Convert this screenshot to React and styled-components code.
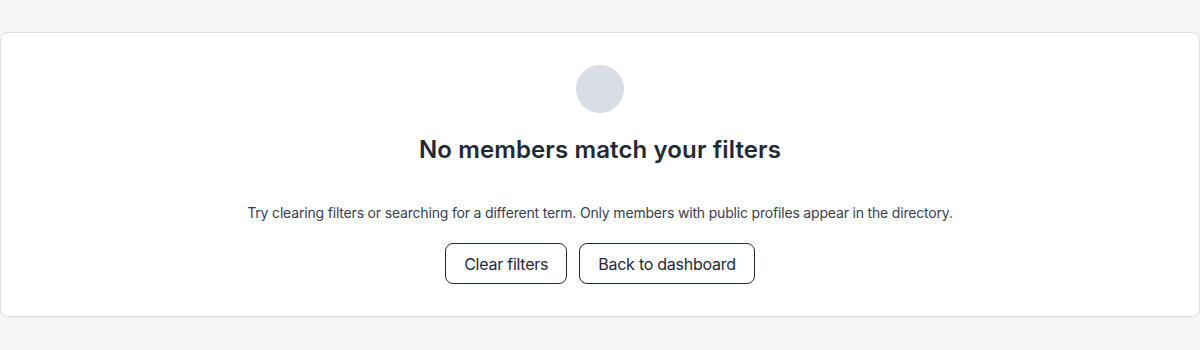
import React from 'react'
import styled, { createGlobalStyle } from 'styled-components'

const GlobalStyle = createGlobalStyle`
  html, body {
    margin: 0;
    background: #f5f6f8;
    font-family: Inter, "Noto Sans", sans-serif;
  }
`

const Page = styled.div`
  padding: 32px 0 33px;
`

const Card = styled.section`
  background: #fff;
  border: 1px solid #dcdfe5;
  border-radius: 8px;
  box-shadow: 0 1px 2px rgba(16, 24, 40, 0.04);
  padding: 32px 24px 32px;
  display: flex;
  flex-direction: column;
  align-items: center;
  text-align: center;
`

const Avatar = styled.div`
  width: 48px;
  height: 48px;
  border-radius: 50%;
  background: #d9dde5;
`

const Title = styled.h2`
  margin: 21px 0 0;
  font-size: 24px;
  line-height: 32px;
  font-weight: 600;
  letter-spacing: 0.12px;
  color: #1f2937;
`

const Message = styled.p`
  margin: 37px 0 0;
  font-size: 14px;
  line-height: 20px;
  letter-spacing: -0.18px;
  color: #374151;
`

const Actions = styled.div`
  display: flex;
  gap: 12px;
  margin-top: 20px;
`

const Button = styled.button`
  height: 41px;
  padding: 0 18px;
  border: 1px solid #1f2937;
  border-radius: 8px;
  background: #fff;
  color: #1f2937;
  font-family: inherit;
  font-size: 16px;
  font-weight: 400;
  letter-spacing: -0.25px;
  cursor: pointer;
`

export default function App() {
  return (
    <>
      <GlobalStyle />
      <Page>
        <Card>
          <Avatar />
          <Title>No members match your filters</Title>
          <Message>
            Try clearing filters or searching for a different term. Only members with public profiles appear in the directory.
          </Message>
          <Actions>
            <Button>Clear filters</Button>
            <Button>Back to dashboard</Button>
          </Actions>
        </Card>
      </Page>
    </>
  )
}
